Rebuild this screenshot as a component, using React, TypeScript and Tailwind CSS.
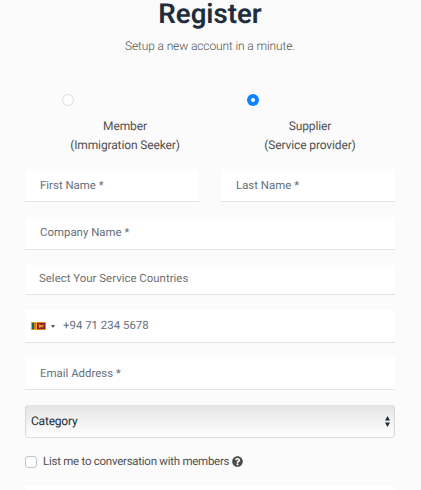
import type { ReactNode } from 'react';
import { FaQuestionCircle } from 'react-icons/fa';

function Field({ label, className = '' }: { label: string; className?: string }) {
  return (
    <div className={`flex h-[33px] items-center border-b border-[#e4e5e6] bg-white pl-[15px] text-[11.4px] tracking-[0.02px] text-[#66707a] ${className}`}>
      <span className="whitespace-nowrap">{label}</span>
    </div>
  );
}

function Role({ selected, children }: { selected?: boolean; children: ReactNode }) {
  return (
    <div className="w-[185px]">
      <div
        className={
          selected
            ? 'ml-[37px] flex size-3 items-center justify-center rounded-full bg-[#0a84ff]'
            : 'ml-[37px] size-3 rounded-full border border-[#dcdcdc] bg-white'
        }
      >
        {selected && <div className="size-1 rounded-full bg-white" />}
      </div>
      <div className="mt-[11px] pl-[15px] text-center text-[12px] leading-[19px] tracking-[-0.13px] text-[#505050]">{children}</div>
    </div>
  );
}

function Flag() {
  return (
    <svg width="15" height="8" viewBox="0 0 15 8">
      <rect width="15" height="8" fill="#f0a51d" />
      <rect x="1" y="0.8" width="2" height="6.4" fill="#126b58" />
      <rect x="3" y="0.8" width="2" height="6.4" fill="#e5731d" />
      <rect x="6" y="0.8" width="8.2" height="6.4" fill="#8c1f35" />
      <path d="M8 5.8V4L7.4 3l1-.8 1.2.9h2.2l.7-.9.3.8-.6 1v1.8h-.8V4.7H9.6v1.1z" fill="#e8a026" />
    </svg>
  );
}

export default function App() {
  return (
    <div className="h-[490px] w-[421px] overflow-hidden bg-[#fbfbfb] pl-[25px] font-['Roboto',sans-serif] [text-rendering:geometricPrecision]">
      <div className="w-[370px]">
        <h1 className="h-[33px] text-center text-[27.6px] leading-[28px] font-semibold text-[#212d3d]">Register</h1>
        <p className="mt-[4px] text-center text-[12px] leading-[18px] font-light tracking-[-0.12px] text-[#505050]">Setup a new account in a minute.</p>
        <div className="mt-[39px] flex">
          <Role>Member<br />(Immigration Seeker)</Role>
          <Role selected>Supplier<br />(Service provider)</Role>
        </div>
        <div className="mt-[14px] flex justify-between">
          <Field label="First Name *" className="w-[174px] pt-px" />
          <Field label="Last Name *" className="w-[174px] pt-px" />
        </div>
        <Field label="Company Name *" className="mt-[15px]" />
        <div className="mt-[15px] ml-px flex h-[30px] items-center border-b border-[#e4e5e6] bg-white pl-[13px] text-[11.4px] tracking-[0.02px] text-[#707070]">
          <span className="-mt-[2px]">Select Your Service Countries</span>
        </div>
        <div className="mt-[15px] flex h-[33px] items-center border-b border-[#e4e5e6] bg-white pl-[6px] text-[11.4px] tracking-[0.02px] text-[#66707a]">
          <Flag />
          <svg className="mr-[8px] ml-[5px]" width="4" height="3" viewBox="0 0 4 3"><path d="M0 0h4L2 3z" fill="#555" /></svg>
          <span>+94 71 234 5678</span>
        </div>
        <Field label="Email Address *" className="mt-[14px] pt-[2px]" />
        <div className="mt-[15px] flex h-[33px] items-center justify-between rounded-[4px] border-b border-[#dfdfdf] bg-linear-to-b from-[#e4e4e4] to-white pr-[5px] pl-[6px] text-[12px] tracking-[-0.2px] text-[#212d3d] shadow-[inset_2px_0_1px_-1px_#d8d8d8,inset_-2px_0_1px_-1px_#d8d8d8]">
          <span className="-mt-px">Category</span>
          <svg width="5" height="11" viewBox="0 0 5 11"><path d="M0 4.5h5L2.5 0zM0 6.5h5L2.5 11z" fill="#212d3d" /></svg>
        </div>
        <div className="mt-[15px] flex h-[18px] items-center text-[11.5px] tracking-[-0.26px] text-[#505050]">
          <div className="size-3 rounded-[3px] border border-[#bfc5cc] bg-white" />
          <span className="ml-[6px]">List me to conversation with members</span>
          <FaQuestionCircle className="-mt-px ml-[3px] size-[11px] text-[#4c4c4c]" />
        </div>
        <div className="mt-[15px] h-[33px] bg-white" />
      </div>
    </div>
  );
}
